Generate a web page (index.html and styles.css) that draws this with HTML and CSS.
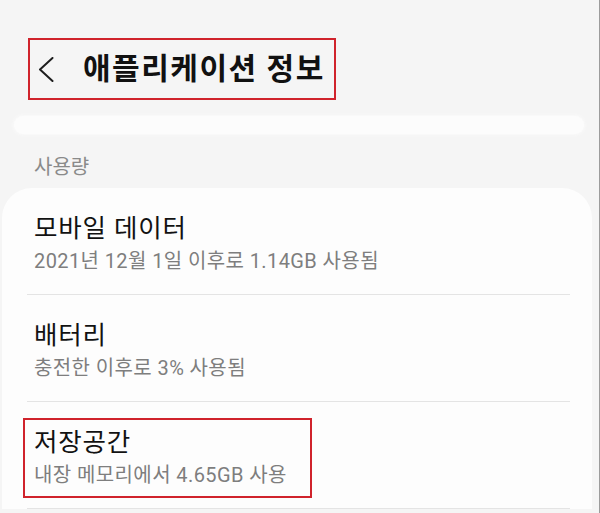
FILE: index.html
```html
<!DOCTYPE html>
<html lang="ko">
<head>
<meta charset="utf-8">
<title>애플리케이션 정보</title>
<link rel="stylesheet" href="styles.css">
</head>
<body>
<div class="screen">
  <header class="header">
    <div class="title-box">
      <svg class="back" width="16" height="25" viewBox="0 0 16 25" aria-hidden="true">
        <path d="M14.5 1 L2 12.5 L14.5 24" fill="none" stroke="#1e1e1e" stroke-width="2" stroke-linecap="round" stroke-linejoin="round"/>
      </svg>
      <h1 class="title">애플리케이션 정보</h1>
    </div>
  </header>
  <div class="pill"></div>
  <div class="section-label">사용량</div>
  <section class="card">
    <div class="item">
      <div class="item-text">
        <div class="item-title">모바일 데이터</div>
        <div class="item-sub">2021년 12월 1일 이후로 1.14GB 사용됨</div>
      </div>
    </div>
    <div class="item">
      <div class="item-text">
        <div class="item-title">배터리</div>
        <div class="item-sub">충전한 이후로 3% 사용됨</div>
      </div>
    </div>
    <div class="item item-marked">
      <div class="item-text mark-box">
        <div class="item-title">저장공간</div>
        <div class="item-sub">내장 메모리에서 4.65GB 사용</div>
      </div>
    </div>
  </section>
</div>
</body>
</html>
```

FILE: styles.css
```css
html, body {
  margin: 0;
  padding: 0;
  background: #f5f5f5;
}

body {
  font-family: Roboto, "Noto Sans CJK KR", sans-serif;
  color: #141414;
  overflow: hidden;
}

.screen {
  width: 600px;
  min-height: 513px;
  box-sizing: border-box;
  border-right: 1px solid #9c9c9c;
}

.header {
  padding: 38px 0 0 28px;
}

.title-box {
  display: inline-flex;
  align-items: center;
  box-sizing: border-box;
  height: 62px;
  padding: 0 9px 0 8px;
  border: 2px solid #d0232c;
}

.back {
  display: block;
  margin-right: 29px;
}

.title {
  margin: 0;
  font-size: 30px;
  font-weight: 700;
  letter-spacing: 1.5px;
  line-height: 36px;
  color: #111;
  white-space: nowrap;
}

.pill {
  margin: 16px 15px 0 14px;
  height: 18px;
  border-radius: 9px;
  background: #fcfcfc;
  box-shadow: 0 0 3px 1px #fafafa;
}

.section-label {
  padding: 21px 0 9px 34px;
  font-size: 20px;
  line-height: 24px;
  color: #8a8a8a;
}

.card {
  margin: 0 7px 0 2px;
  padding: 0 22px 0 25px;
  background: #fdfdfd;
  border-radius: 30px 30px 0 0;
}

.item {
  padding: 24px 0 19px;
  border-bottom: 1px solid #e4e4e4;
}

.item-text {
  padding-left: 7px;
}

.item-title {
  font-size: 25.5px;
  letter-spacing: 0.8px;
  line-height: 32px;
  color: #121212;
  white-space: nowrap;
}

.item-sub {
  margin-top: 3px;
  font-size: 20px;
  letter-spacing: 0.4px;
  line-height: 28px;
  color: #7e7e7e;
  white-space: nowrap;
}

.item-marked {
  padding: 16px 0 10px;
}

.mark-box {
  box-sizing: border-box;
  width: 289px;
  margin-left: -4px;
  padding: 6px 0 7px 9px;
  border: 2px solid #d0232c;
}
```
